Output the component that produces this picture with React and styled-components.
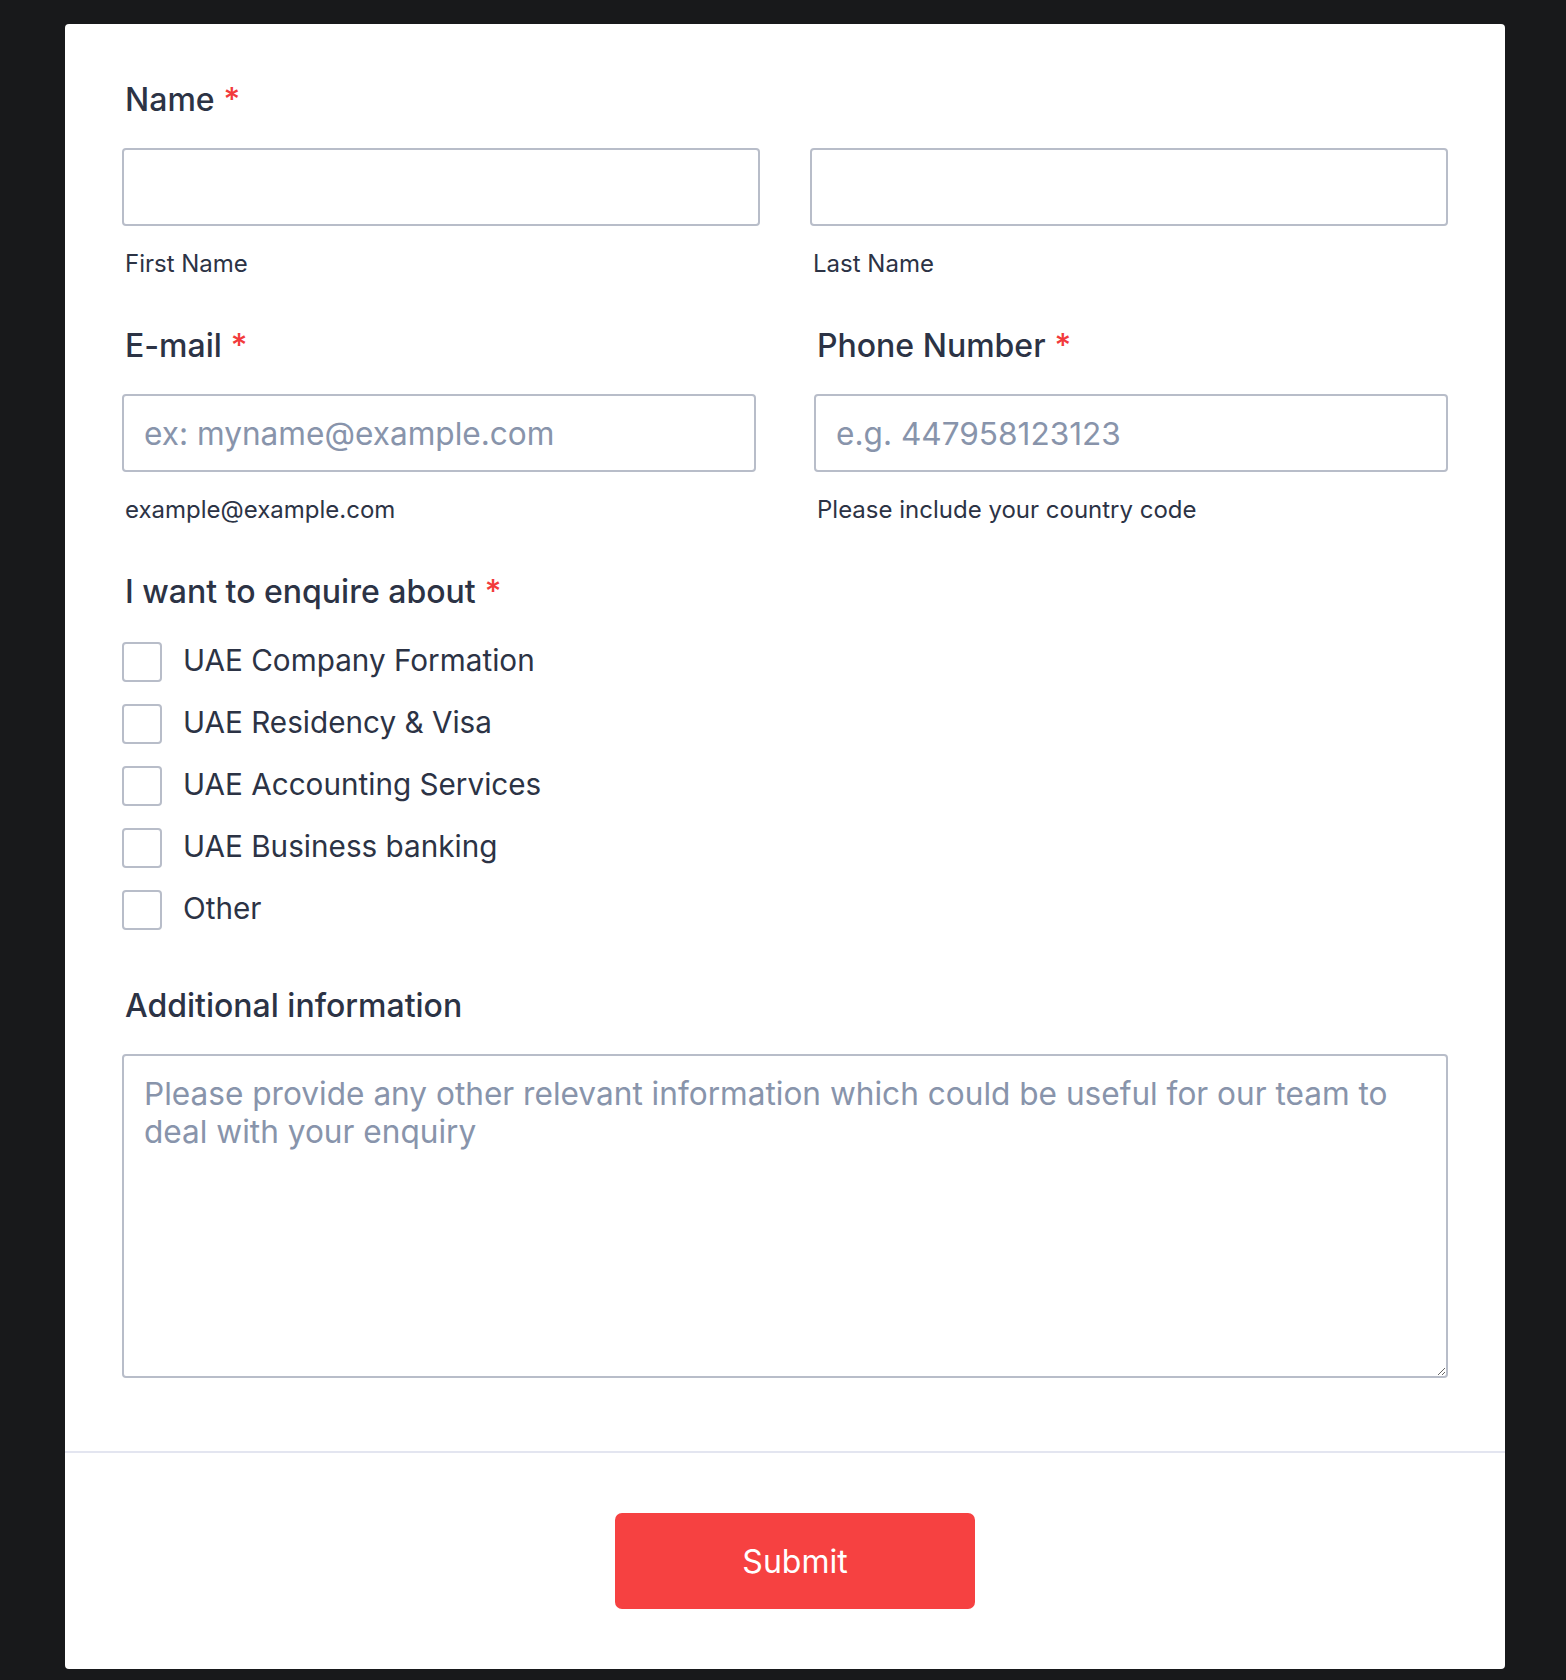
import styled, { createGlobalStyle } from "styled-components";

const GlobalStyle = createGlobalStyle`
  * {
    box-sizing: border-box;
  }
  body {
    margin: 0;
    background-color: #18191b;
    font-family: Inter, "Noto Sans", sans-serif;
    color: #2c3345;
  }
`;

const Page = styled.div`
  min-height: 1680px;
  padding: 24px 61px 12px 65px;
  display: flex;
  align-items: flex-start;
`;

const Card = styled.form`
  width: 1440px;
  background-color: #ffffff;
  border-radius: 4px;
`;

const Fields = styled.div`
  padding: 56px 57px 73px;
  display: flex;
  flex-direction: column;
`;

const Row = styled.div`
  display: grid;
  grid-template-columns: 1fr 1fr;
  column-gap: ${(p) => p.gap}px;
  margin-bottom: ${(p) => p.mb || 0}px;
`;

const Field = styled.div`
  display: flex;
  flex-direction: column;
  margin-bottom: ${(p) => p.mb || 0}px;
`;

const Label = styled.label`
  font-size: 32px;
  font-weight: 500;
  line-height: normal;
  padding-left: 3px;
  margin-bottom: 29px;
  color: #2c3345;
`;

const Required = styled.span`
  color: #f23a3c;
  margin-left: 9px;
`;

const Input = styled.input`
  width: 100%;
  height: 78px;
  border: 2px solid #b8bdc9;
  border-radius: 4px;
  padding: 0 20px;
  font-family: Inter, sans-serif;
  font-size: 31.6px;
  color: #2c3345;
  outline: none;

  &::placeholder {
    color: #8894ab;
  }
`;

const SubLabel = styled.span`
  font-size: 24px;
  line-height: normal;
  padding-left: 3px;
  margin-top: 23px;
  color: #2c3345;
`;

const Options = styled.div`
  display: flex;
  flex-direction: column;
  gap: 22px;
  padding-top: 2px;
`;

const Option = styled.label`
  display: flex;
  align-items: center;
  gap: 21px;
  height: 40px;
`;

const Box = styled.span`
  width: 40px;
  height: 40px;
  flex-shrink: 0;
  border: 2px solid #b8bdc9;
  border-radius: 4px;
  background: #ffffff;
`;

const OptionText = styled.span`
  font-size: 29.7px;
  line-height: normal;
  padding-bottom: 4px;
  color: #2c3345;
`;

const TextArea = styled.textarea`
  width: 100%;
  height: 324px;
  border: 2px solid #b8bdc9;
  border-radius: 4px;
  padding: 19px 20px;
  font-family: Inter, sans-serif;
  font-size: 31.6px;
  line-height: 38px;
  color: #2c3345;
  resize: vertical;
  outline: none;

  &::placeholder {
    color: #8894ab;
  }
`;

const Footer = styled.div`
  border-top: 2px solid #e3e5f0;
  padding: 60px 0 60px 20px;
  display: flex;
  justify-content: center;
`;

const SubmitButton = styled.button`
  width: 360px;
  height: 96px;
  border: none;
  border-radius: 7px;
  background-color: #f64141;
  color: #ffffff;
  font-family: Inter, sans-serif;
  font-size: 32px;
  font-weight: 400;
`;

const enquiryOptions = [
  "UAE Company Formation",
  "UAE Residency & Visa",
  "UAE Accounting Services",
  "UAE Business banking",
  "Other",
];

function App() {
  return (
    <>
      <GlobalStyle />
      <Page>
        <Card onSubmit={(e) => e.preventDefault()}>
          <Fields>
            <Field mb={48}>
              <Label>
                Name<Required>*</Required>
              </Label>
              <Row gap={50}>
                <Field>
                  <Input type="text" />
                  <SubLabel>First Name</SubLabel>
                </Field>
                <Field>
                  <Input type="text" />
                  <SubLabel>Last Name</SubLabel>
                </Field>
              </Row>
            </Field>

            <Row gap={58} mb={48}>
              <Field>
                <Label>
                  E-mail<Required>*</Required>
                </Label>
                <Input type="email" placeholder="ex: myname@example.com" />
                <SubLabel>example@example.com</SubLabel>
              </Field>
              <Field>
                <Label>
                  Phone Number<Required>*</Required>
                </Label>
                <Input type="tel" placeholder="e.g. 447958123123" />
                <SubLabel>Please include your country code</SubLabel>
              </Field>
            </Row>

            <Field mb={56}>
              <Label>
                I want to enquire about<Required>*</Required>
              </Label>
              <Options>
                {enquiryOptions.map((opt) => (
                  <Option key={opt}>
                    <Box />
                    <OptionText>{opt}</OptionText>
                  </Option>
                ))}
              </Options>
            </Field>

            <Field>
              <Label>Additional information</Label>
              <TextArea placeholder="Please provide any other relevant information which could be useful for our team to deal with your enquiry" />
            </Field>
          </Fields>
          <Footer>
            <SubmitButton type="submit">Submit</SubmitButton>
          </Footer>
        </Card>
      </Page>
    </>
  );
}

export default App;
